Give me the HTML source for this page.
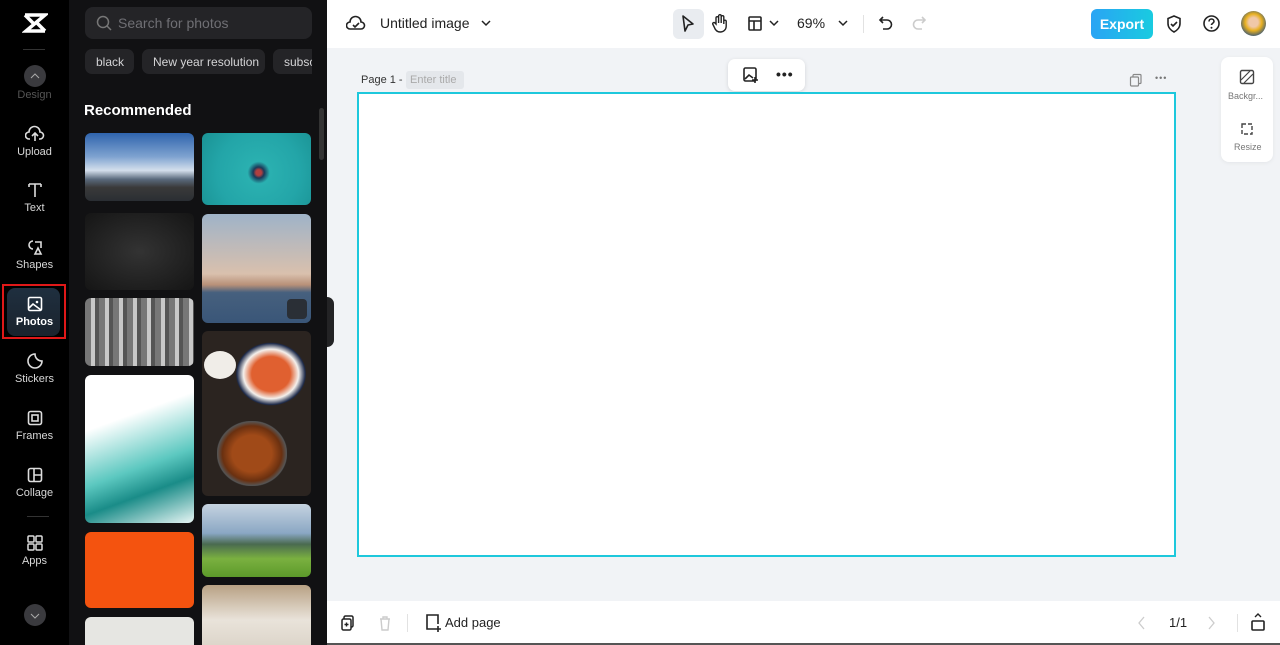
<!DOCTYPE html>
<html><head><meta charset="utf-8"><style>
*{box-sizing:border-box;margin:0;padding:0}
html{overflow:hidden;height:645px}
body{width:1280px;height:645px;overflow:hidden;font-family:"Liberation Sans",sans-serif;background:#f1f3f6;position:relative}
.rail{position:absolute;left:0;top:0;width:69px;height:645px;background:#000}
.ri{position:absolute;left:0;width:69px;text-align:center;color:#d8d8d8;font-size:11px}
.ri svg{display:block;margin:0 auto 3px}
.panel{position:absolute;left:69px;top:0;width:258px;height:645px;background:#111113;overflow:hidden}
.search{position:absolute;left:16px;top:7px;width:227px;height:32px;border-radius:8px;background:#242427;color:#6f6f74;font-size:14px;padding:8px 0 0 33px}
.tag{position:absolute;top:49px;height:25px;border-radius:7px;background:#242427;color:#d4d4d6;font-size:12px;padding:6px 11px 0;white-space:nowrap;overflow:hidden}
.t{position:absolute;border-radius:6px;overflow:hidden}
.top{position:absolute;left:327px;top:0;width:953px;height:48px;background:#fff}
.bot{position:absolute;left:327px;top:601px;width:953px;height:44px;background:#fff}
.ic{position:absolute}
</style></head><body>
<div class="rail">
 <svg class="ic" style="left:22px;top:12px" width="26" height="22" viewBox="0 0 26 22"><path d="M3 3h20L4 19h19M3 3l8 8M23 19l-8-8" stroke="#fff" stroke-width="3.5" fill="none"/></svg>
 <div style="position:absolute;left:23px;top:49px;width:22px;height:1px;background:#333"></div>
 <div style="position:absolute;left:24px;top:65px;width:22px;height:22px;border-radius:50%;background:#3a3a3e"></div>
 <svg class="ic" style="left:29px;top:71px" width="12" height="10"><path d="M2 7l4-4 4 4" stroke="#aaa" fill="none"/></svg>
 <div class="ri" style="top:89px;color:#555">Design</div>
 <div class="ri" style="top:125px"><svg width="20" height="18" viewBox="0 0 20 18"><path d="M5 14H4a3.5 3.5 0 010-7 5.5 5.5 0 0111 0 3.5 3.5 0 010 7h-1M10 16V9M7 11l3-3 3 3" stroke="#ddd" stroke-width="1.6" fill="none"/></svg>Upload</div>
 <div class="ri" style="top:181px"><svg width="18" height="18"><path d="M3 3h12M9 3v13M3 3v3M15 3v3" stroke="#ddd" stroke-width="1.6" fill="none"/></svg>Text</div>
 <div class="ri" style="top:238px"><svg width="18" height="18"><path d="M7 3a4 4 0 100 8M9 4h6v6M9 16l3-6 3 6z" stroke="#ddd" stroke-width="1.6" fill="none"/></svg>Shapes</div>
 <div style="position:absolute;left:2px;top:284px;width:64px;height:55px;border:2px solid #e01818"></div>
 <div style="position:absolute;left:7px;top:288px;width:53px;height:48px;border-radius:8px;background:linear-gradient(#1f2f3f,#1a232d)"></div>
 <div class="ri" style="top:295px;color:#fff;font-weight:bold"><svg width="18" height="18"><rect x="2.5" y="2.5" width="13" height="13" rx="1.5" stroke="#fff" stroke-width="1.6" fill="none"/><path d="M3 13l4-4 8 6" stroke="#fff" stroke-width="1.6" fill="none"/><circle cx="11" cy="7" r="1.3" fill="#fff"/></svg>Photos</div>
 <div class="ri" style="top:352px"><svg width="18" height="18"><path d="M9 2a7 7 0 107 7c-4 0-7-3-7-7zM9 2c0 4 3 7 7 7" stroke="#ddd" stroke-width="1.6" fill="none"/></svg>Stickers</div>
 <div class="ri" style="top:409px"><svg width="18" height="18"><rect x="2.5" y="2.5" width="13" height="13" rx="2" stroke="#ddd" stroke-width="1.6" fill="none"/><rect x="6" y="6" width="6" height="6" stroke="#ddd" stroke-width="1.6" fill="none"/></svg>Frames</div>
 <div class="ri" style="top:466px"><svg width="18" height="18"><rect x="2.5" y="2.5" width="13" height="13" rx="2" stroke="#ddd" stroke-width="1.6" fill="none"/><path d="M8 3v12M8 9h7" stroke="#ddd" stroke-width="1.6"/></svg>Collage</div>
 <div style="position:absolute;left:27px;top:516px;width:22px;height:1px;background:#333"></div>
 <div class="ri" style="top:534px"><svg width="18" height="18"><rect x="2" y="2" width="6" height="6" rx="1" stroke="#ddd" stroke-width="1.5" fill="none"/><rect x="10" y="2" width="6" height="6" rx="1" stroke="#ddd" stroke-width="1.5" fill="none"/><rect x="2" y="10" width="6" height="6" rx="1" stroke="#ddd" stroke-width="1.5" fill="none"/><rect x="10" y="10" width="6" height="6" rx="1" stroke="#ddd" stroke-width="1.5" fill="none"/></svg>Apps</div>
 <div style="position:absolute;left:24px;top:604px;width:22px;height:22px;border-radius:50%;background:#3a3a3e"></div>
 <svg class="ic" style="left:29px;top:611px" width="12" height="10"><path d="M2 3l4 4 4-4" stroke="#aaa" fill="none"/></svg>
</div>
<div class="panel">
<div class="search">Search for photos</div>
<svg class="ic" style="left:27px;top:15px" width="16" height="16"><circle cx="7" cy="7" r="5.5" stroke="#777" stroke-width="1.5" fill="none"/><path d="M11 11l4 4" stroke="#777" stroke-width="1.5"/></svg>
<div class="tag" style="left:16px;width:49px">black</div>
<div class="tag" style="left:73px;width:123px">New year resolution</div>
<div class="tag" style="left:204px;width:39px;border-radius:7px 0 0 7px">subsc</div>
<div style="position:absolute;left:15px;top:102px;color:#fff;font-weight:bold;font-size:15px">Recommended</div>
<div style="position:absolute;left:250px;top:108px;width:5px;height:52px;border-radius:3px;background:#333"></div>
<div class="t" style="left:16px;top:133px;width:109px;height:68px;background:linear-gradient(#2f64ad 0%,#7fa3d0 35%,#d4dfec 55%,#5a6a7d 68%,#3a3a3a 80%,#2a2e33)"></div>
<div class="t" style="left:16px;top:213px;width:109px;height:77px;background:radial-gradient(#333,#151515)"></div>
<div class="t" style="left:16px;top:298px;width:109px;height:68px;background:repeating-linear-gradient(90deg,#777 0 6px,#c8c8c8 6px 10px,#555 10px 14px)"></div>
<div class="t" style="left:16px;top:375px;width:109px;height:148px;background:linear-gradient(160deg,#fff 30%,#5cc8c0 60%,#1a8c88 75%,#e8f6f5)"></div>
<div class="t" style="left:16px;top:532px;width:109px;height:76px;background:#f4530f"></div>
<div class="t" style="left:16px;top:617px;width:109px;height:40px;background:#e6e6e2"></div>
<div class="t" style="left:133px;top:133px;width:109px;height:72px;background:radial-gradient(circle at 52% 55%,#b04040 4%,#1a3a5a 8%,#2ab0b0 16%,#23a5a8 60%,#1a9294)"></div>
<div class="t" style="left:133px;top:214px;width:109px;height:109px;background:linear-gradient(#9fb3c8 0%,#d9c0ad 55%,#b89078 65%,#46607e 72%,#3a5678)"></div>
<div style="position:absolute;left:218px;top:299px;width:20px;height:20px;border-radius:4px;background:#2a2f36"></div>
<div class="t" style="left:133px;top:331px;width:109px;height:165px;background:#2b2420">
 <div style="position:absolute;left:30px;top:8px;width:78px;height:70px;border-radius:50%;background:radial-gradient(#e06030 35%,#f4f0ec 50%,#1d2a4a 62%,transparent 64%)"></div>
 <div style="position:absolute;left:2px;top:20px;width:32px;height:28px;border-radius:50%;background:#f0ede8"></div>
 <div style="position:absolute;left:15px;top:90px;width:70px;height:65px;border-radius:45%;background:radial-gradient(#a04a18 40%,#6a3010 60%,#555 70%,transparent 72%)"></div>
</div>
<div class="t" style="left:133px;top:504px;width:109px;height:73px;background:linear-gradient(#c5d3e0 0%,#8aa7c4 40%,#4a6a50 55%,#7ab040 75%,#5c9a2a)"></div>
<div class="t" style="left:133px;top:585px;width:109px;height:70px;background:linear-gradient(#b8a184,#e9e3da 50%,#d8d0c4)"></div>
</div>
<div style="position:absolute;left:327px;top:297px;width:7px;height:50px;border-radius:0 8px 8px 0;background:#232325"></div>
<!-- top bar -->
<div class="top"></div>
<svg class="ic" style="left:346px;top:14px" width="20" height="18"><path d="M5 15H4a3.5 3.5 0 010-7 5.5 5.5 0 0111 0 3.5 3.5 0 010 7H5zM7 11l2 2 4-4" stroke="#222" stroke-width="1.6" fill="none"/></svg>
<div style="position:absolute;left:380px;top:15px;font-size:14px;color:#222">Untitled image</div>
<svg class="ic" style="left:480px;top:18px" width="12" height="10"><path d="M2 3l4 4 4-4" stroke="#222" stroke-width="1.5" fill="none"/></svg>
<div style="position:absolute;left:673px;top:9px;width:31px;height:30px;border-radius:6px;background:#e9ecf0"></div>
<svg class="ic" style="left:680px;top:14px" width="16" height="20"><path d="M3 2l10 8-5 1-3 6z" stroke="#222" stroke-width="1.6" fill="none" stroke-linejoin="round"/></svg>
<svg class="ic" style="left:711px;top:13px" width="18" height="20"><path d="M5 11V5a1.3 1.3 0 012.6 0v5V3a1.3 1.3 0 012.6 0v7V4a1.3 1.3 0 012.6 0v7-3a1.3 1.3 0 012.4 0v5c0 4-3 6-6 6s-5-2-6-5l-1.5-3a1.3 1.3 0 012.3-1z" stroke="#222" stroke-width="1.4" fill="none"/></svg>
<svg class="ic" style="left:747px;top:15px" width="16" height="17"><rect x="2" y="2" width="12" height="13" rx="1" stroke="#222" stroke-width="1.6" fill="none"/><path d="M2 6h12M7 6v9" stroke="#222" stroke-width="1.6"/></svg>
<svg class="ic" style="left:768px;top:18px" width="12" height="10"><path d="M2 3l4 4 4-4" stroke="#222" stroke-width="1.5" fill="none"/></svg>
<div style="position:absolute;left:797px;top:15px;font-size:14px;color:#222">69%</div>
<svg class="ic" style="left:837px;top:18px" width="12" height="10"><path d="M2 3l4 4 4-4" stroke="#222" stroke-width="1.5" fill="none"/></svg>
<div style="position:absolute;left:863px;top:15px;width:1px;height:18px;background:#e2e2e2"></div>
<svg class="ic" style="left:877px;top:14px" width="18" height="18"><path d="M6 3L3 6l3 3M3 6h7a4.5 4.5 0 010 9H6" stroke="#222" stroke-width="1.6" fill="none"/></svg>
<svg class="ic" style="left:910px;top:14px" width="18" height="18"><path d="M12 3l3 3-3 3M15 6H8a4.5 4.5 0 000 9h4" stroke="#ccc" stroke-width="1.6" fill="none"/></svg>
<div style="position:absolute;left:1091px;top:9px;width:62px;height:30px;border-radius:6px;background:linear-gradient(90deg,#2aa4f4,#19cbe0);color:#fff;font-weight:bold;font-size:14px;text-align:center;line-height:30px">Export</div>
<svg class="ic" style="left:1165px;top:14px" width="18" height="20"><path d="M9 2l6 2.5v5c0 4-3 7-6 8.5-3-1.5-6-4.5-6-8.5v-5z" stroke="#222" stroke-width="1.6" fill="none"/><path d="M6 10l2 2 4-4" stroke="#222" stroke-width="1.6" fill="none"/></svg>
<svg class="ic" style="left:1202px;top:14px" width="19" height="19"><circle cx="9.5" cy="9.5" r="7.5" stroke="#222" stroke-width="1.6" fill="none"/><path d="M7 7.5a2.5 2.5 0 015 0c0 1.7-2.5 1.8-2.5 3.5" stroke="#222" stroke-width="1.6" fill="none"/><circle cx="9.5" cy="13.8" r="1" fill="#222"/></svg>
<div style="position:absolute;left:1241px;top:11px;width:25px;height:25px;border-radius:50%;background:radial-gradient(circle at 50% 45%,#f0c8a8 25%,#e8b020 45%,#2a5080 80%)"></div>
<!-- canvas -->
<div style="position:absolute;left:361px;top:74px;font-size:11px;color:#333">Page 1 -</div>
<div style="position:absolute;left:406px;top:71px;width:58px;height:18px;border-radius:3px;background:#e4e7eb;font-size:11px;color:#aaa;padding:3px 0 0 4px">Enter title</div>
<div style="position:absolute;left:728px;top:59px;width:77px;height:32px;border-radius:7px;background:#fff;box-shadow:0 1px 4px rgba(0,0,0,.12)"></div>
<svg class="ic" style="left:742px;top:66px" width="18" height="18"><rect x="2" y="2" width="12" height="13" rx="1.5" stroke="#222" stroke-width="1.6" fill="none"/><path d="M3 13l4-4 4 3M13 11v6M10 14h6" stroke="#222" stroke-width="1.6" fill="none"/></svg>
<div style="position:absolute;left:776px;top:66px;font-size:14px;font-weight:bold;color:#222;letter-spacing:1px">•••</div>
<svg class="ic" style="left:1129px;top:73px" width="14" height="14"><rect x="4" y="1.5" width="8" height="9" rx="1" stroke="#888" stroke-width="1.2" fill="none"/><rect x="1.5" y="4" width="8" height="9" rx="1" stroke="#888" stroke-width="1.2" fill="#f1f3f6"/></svg>
<div style="position:absolute;left:1155px;top:73px;font-size:9px;color:#777;letter-spacing:1px">•••</div>
<div style="position:absolute;left:357px;top:92px;width:819px;height:465px;background:#fff;border:2px solid #1ec8dc"></div>
<div style="position:absolute;left:1221px;top:57px;width:52px;height:105px;border-radius:8px;background:#fff;box-shadow:0 1px 4px rgba(0,0,0,.06)"></div>
<svg class="ic" style="left:1239px;top:69px" width="16" height="16"><rect x="1.5" y="1.5" width="13" height="13" rx="1.5" stroke="#444" stroke-width="1.4" fill="none"/><path d="M2 11l9-9M5 14l9-9" stroke="#444" stroke-width="1.2"/></svg>
<div style="position:absolute;left:1228px;top:91px;font-size:9px;color:#777">Backgr...</div>
<svg class="ic" style="left:1239px;top:121px" width="16" height="16"><path d="M3 3h10v10H3z" stroke="#444" stroke-width="1.4" fill="none" stroke-dasharray="4 2"/></svg>
<div style="position:absolute;left:1234px;top:142px;font-size:9px;color:#777">Resize</div>
<!-- bottom -->
<div class="bot"></div>
<svg class="ic" style="left:340px;top:614px" width="16" height="18"><rect x="4" y="2" width="9" height="11" rx="1.5" stroke="#222" stroke-width="1.5" fill="none"/><rect x="2" y="5" width="9" height="11" rx="1.5" stroke="#222" stroke-width="1.5" fill="#fff"/><path d="M6.5 8.5v4M4.5 10.5h4" stroke="#222" stroke-width="1.4"/></svg>
<svg class="ic" style="left:377px;top:614px" width="16" height="18"><path d="M3 5h10M6 5V3h4v2M4 5l1 11h6l1-11" stroke="#ccc" stroke-width="1.4" fill="none"/></svg>
<div style="position:absolute;left:407px;top:614px;width:1px;height:18px;background:#e2e2e2"></div>
<svg class="ic" style="left:424px;top:613px" width="18" height="20"><path d="M11 16H3V2h11v9M14 13v6M11 16h6" stroke="#222" stroke-width="1.6" fill="none"/></svg>
<div style="position:absolute;left:445px;top:615px;font-size:13px;color:#222">Add page</div>
<svg class="ic" style="left:1137px;top:615px" width="10" height="16"><path d="M7 2L2 8l5 6" stroke="#ccc" stroke-width="1.3" fill="none"/></svg>
<div style="position:absolute;left:1169px;top:615px;font-size:13px;color:#222">1/1</div>
<svg class="ic" style="left:1206px;top:615px" width="10" height="16"><path d="M3 2l5 6-5 6" stroke="#ccc" stroke-width="1.3" fill="none"/></svg>
<div style="position:absolute;left:1237px;top:614px;width:1px;height:18px;background:#e2e2e2"></div>
<svg class="ic" style="left:1250px;top:612px" width="16" height="20"><path d="M5 5l3-3 3 3" stroke="#222" stroke-width="1.4" fill="none"/><rect x="2" y="9" width="12" height="9" rx="1" stroke="#222" stroke-width="1.6" fill="none"/></svg>
<div style="position:absolute;left:327px;top:643px;width:953px;height:2px;background:#555"></div>
</body></html>
